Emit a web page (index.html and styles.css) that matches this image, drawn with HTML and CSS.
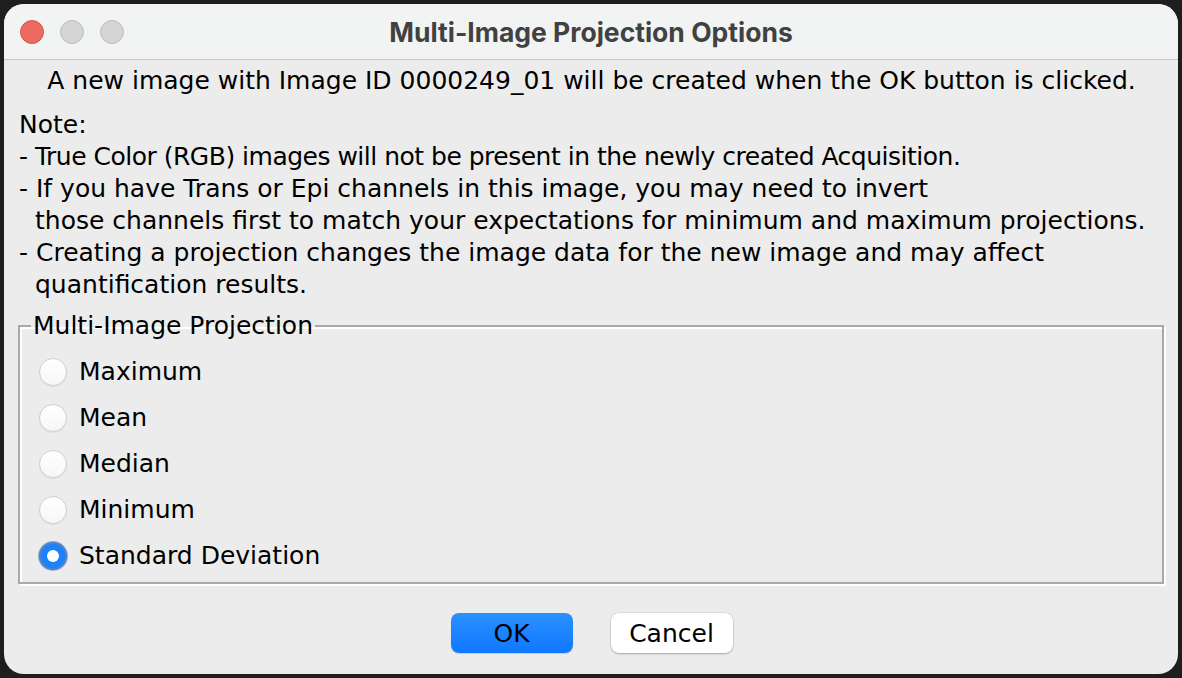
FILE: index.html
```html
<!DOCTYPE html>
<html>
<head>
<meta charset="utf-8">
<link rel="stylesheet" href="styles.css">
</head>
<body>
<div class="window">
  <div class="titlebar">
    <div class="lights">
      <span class="light red"></span>
      <span class="light gray"></span>
      <span class="light gray"></span>
    </div>
    <div class="title">Multi-Image Projection Options</div>
  </div>
  <div class="content">
    <div class="intro">A new image with Image ID 0000249_01 will be created when the OK button is clicked.</div>
    <div class="notes">
      <div>Note:</div>
      <div class="tight">- True Color (RGB) images will not be present in the newly created Acquisition.</div>
      <div>- If you have Trans or Epi channels in this image, you may need to invert</div>
      <div class="indent">those channels first to match your expectations for minimum and maximum projections.</div>
      <div>- Creating a projection changes the image data for the new image and may affect</div>
      <div class="indent">quantification results.</div>
    </div>
    <fieldset class="group">
      <legend>Multi-Image Projection</legend>
      <div class="option"><span class="radio"></span><span>Maximum</span></div>
      <div class="option"><span class="radio"></span><span>Mean</span></div>
      <div class="option"><span class="radio"></span><span>Median</span></div>
      <div class="option"><span class="radio"></span><span>Minimum</span></div>
      <div class="option"><span class="radio checked"></span><span>Standard Deviation</span></div>
    </fieldset>
    <div class="buttons">
      <button class="btn primary">OK</button>
      <button class="btn">Cancel</button>
    </div>
  </div>
</div>
</body>
</html>
```
FILE: styles.css
```css
html, body {
  margin: 0;
  padding: 0;
  background: #1e1e1e;
  width: 1182px;
  height: 678px;
  overflow: hidden;
}
.window {
  margin: 4px 4px 0 4px;
  width: 1174px;
  height: 670px;
  background: #ececec;
  border-radius: 20px;
  overflow: hidden;
  font-family: "DejaVu Sans", sans-serif;
  font-size: 25px;
  color: #000;
  display: flex;
  flex-direction: column;
}
.titlebar {
  flex-shrink: 0;
  height: 55px;
  background: #f2f3f3;
  border-bottom: 1px solid #c6c6c6;
  display: flex;
  align-items: center;
  position: relative;
}
.lights {
  display: flex;
  gap: 16px;
  padding-left: 16px;
  position: relative;
  z-index: 1;
}
.light {
  width: 24px;
  height: 24px;
  border-radius: 50%;
  box-sizing: border-box;
  display: block;
}
.light.red {
  background: #ec6a5f;
  border: 1px solid #d25649;
}
.light.gray {
  background: #d5d5d5;
  border: 1px solid #bcbcbc;
}
.title {
  position: absolute;
  left: 0;
  right: 0;
  top: 0;
  bottom: 0;
  display: flex;
  align-items: center;
  justify-content: center;
  font-family: "Inter", sans-serif;
  font-weight: 700;
  font-size: 26.5px;
  color: #414141;
}
.content {
  padding: 5px 14px 0 15px;
  line-height: 32px;
}
.intro {
  text-align: center;
  white-space: nowrap;
}
.notes {
  margin-top: 12px;
  white-space: nowrap;
}
.tight {
  letter-spacing: -0.5px;
}
.indent {
  padding-left: 16px;
}
.group {
  margin: 9px 0 0 -1px;
  padding: 7px 11px 3px 11px;
  border: 2px solid #a9a9a9;
  box-shadow: 2px 2px 0 #ffffff, inset 2px 2px 0 #ffffff;
}
.group legend {
  padding: 0 2px;
  line-height: 32px;
}
.option {
  height: 46px;
  display: flex;
  align-items: center;
  gap: 12px;
  padding-left: 8px;
}
.radio {
  width: 28px;
  height: 28px;
  box-sizing: border-box;
  border-radius: 50%;
  background: linear-gradient(#ffffff, #f7f7f7);
  border: 1px solid #cfcfcf;
  box-shadow: 0 1px 1px rgba(0,0,0,0.06);
  position: relative;
}
.radio.checked {
  background: #1a82fb;
  border: 2px solid #4f7fc4;
  box-shadow: 0 0 0 1px #8fb0de;
}
.radio.checked::after {
  content: "";
  position: absolute;
  left: 50%;
  top: 50%;
  width: 12px;
  height: 12px;
  margin: -6px 0 0 -6px;
  border-radius: 50%;
  background: #fff;
}
.buttons {
  display: flex;
  justify-content: center;
  gap: 38px;
  margin-top: 29px;
}
.btn {
  width: 122px;
  height: 40px;
  border-radius: 8px;
  border: none;
  font-family: "DejaVu Sans", sans-serif;
  font-size: 25px;
  color: #000;
  background: #ffffff;
  box-shadow: 0 1px 2px rgba(0,0,0,0.25), 0 0 0 0.5px rgba(0,0,0,0.12);
  padding: 0;
}
.btn.primary {
  background: linear-gradient(#2a90ff, #1078ff);
  box-shadow: 0 1px 1px rgba(0,0,0,0.15);
}
```
